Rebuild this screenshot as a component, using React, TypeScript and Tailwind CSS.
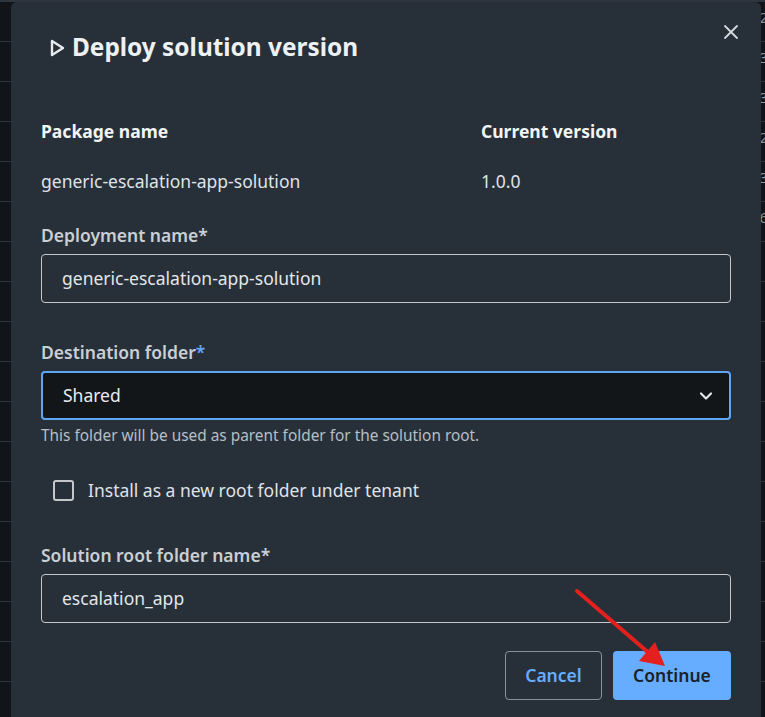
import React from 'react';
import { X, ChevronDown } from 'lucide-react';

const rowDigits = ['2', '3', '3', '2', '3', '6', '', '', '', '', '', '', '', '', '', '', '', ''];

const Label = ({ text, blueStar }: { text: string; blueStar?: boolean }) => (
  <div className="text-[17.5px] leading-6 font-semibold text-[#c9cfd5]">
    {text}
    <span className={blueStar ? 'text-[#5ea6f5]' : ''}>*</span>
  </div>
);

export default function App() {
  return (
    <div
      className="relative w-[765px] h-[717px] overflow-hidden bg-[#111519] border-t-2 border-[#2f353c]"
      style={{ fontFamily: '"Noto Sans", "Open Sans", sans-serif' }}
    >
      {/* table rows behind the dialog */}
      <div className="flex flex-col">
        {rowDigits.map((d, i) => (
          <div key={i} className="h-10 border-b border-[#30363d] flex items-center justify-end">
            <span className="text-[15px] text-[#8a9299] -mr-[3px] -mt-[8px]">{d}</span>
          </div>
        ))}
      </div>

      {/* dialog */}
      <div className="absolute left-[11px] top-0 w-[750px] h-[730px] bg-[#273038] rounded-t-md px-[30px] pt-[29px]">
        <button className="absolute right-[18px] top-[18px] text-[#d3d8dd]">
          <X className="w-6 h-6" strokeWidth={1.8} />
        </button>

        <div className="flex items-center h-8 pl-[9px]">
          <svg width="15" height="18" viewBox="0 0 15 18" className="mr-[7px] mt-[1px]">
            <path d="M2 2 L13 9 L2 16 Z" fill="none" stroke="#e8ebee" strokeWidth="2.4" strokeLinejoin="round" />
          </svg>
          <h1 className="text-[24.4px] font-bold text-[#eef1f3]">Deploy solution version</h1>
        </div>

        <div className="grid grid-cols-[440px_1fr] mt-[56px] text-[17.5px] leading-6">
          <div className="font-bold text-[#f2f4f6]">Package name</div>
          <div className="font-bold text-[#f2f4f6]">Current version</div>
          <div className="mt-[26px] text-[#dfe3e7]">generic-escalation-app-solution</div>
          <div className="mt-[26px] text-[#dfe3e7]">1.0.0</div>
        </div>

        <div className="mt-[30px]">
          <Label text="Deployment name" />
          <div className="mt-[7px] h-[49px] border border-[#c3c8cd] rounded-[4px] flex items-center px-5 text-[17.5px] text-[#e3e6e9]">
            generic-escalation-app-solution
          </div>
        </div>

        <div className="mt-[37px]">
          <Label text="Destination folder" blueStar />
          <div className="mt-[7px] h-[49px] border-2 border-[#5ea6f5] rounded-[4px] bg-[#121619] flex items-center justify-between pl-5 pr-[13px] text-[17.5px] text-[#e8ebee]">
            <span>Shared</span>
            <ChevronDown className="w-5 h-5 text-[#e3e6e9]" strokeWidth={2.6} />
          </div>
          <div className="mt-[6px] text-[15.4px] leading-5 text-[#b7bec5]">
            This folder will be used as parent folder for the solution root.
          </div>
        </div>

        <label className="mt-[32px] flex items-center h-6 pl-[12px] text-[17.5px] text-[#dfe3e7]">
          <span className="w-[21px] h-[21px] border-2 border-[#c3c8cd] rounded-[3px] mr-[14px]" />
          Install as a new root folder under tenant
        </label>

        <div className="mt-[41px]">
          <Label text="Solution root folder name" />
          <div className="mt-[7px] h-[49px] border border-[#c3c8cd] rounded-[4px] flex items-center px-5 text-[17.5px] text-[#e3e6e9]">
            escalation_app
          </div>
        </div>

        <div className="mt-[28px] flex justify-end gap-[11px]">
          <button className="w-[97px] h-[49px] border border-[#8a9299] rounded-[4px] text-[17.5px] font-semibold text-[#66adff]">
            Cancel
          </button>
          <button className="w-[118px] h-[49px] bg-[#66adff] rounded-[4px] text-[17.5px] font-semibold text-[#1b2129]">
            Continue
          </button>
        </div>
      </div>

      {/* annotation arrow */}
      <svg className="absolute left-0 top-0 pointer-events-none" width="765" height="717">
        <line x1="577" y1="589" x2="650" y2="652" stroke="#e3201d" strokeWidth="4" strokeLinecap="round" />
        <polygon points="665,664 639,659 655,640" fill="#e3201d" />
      </svg>
    </div>
  );
}
